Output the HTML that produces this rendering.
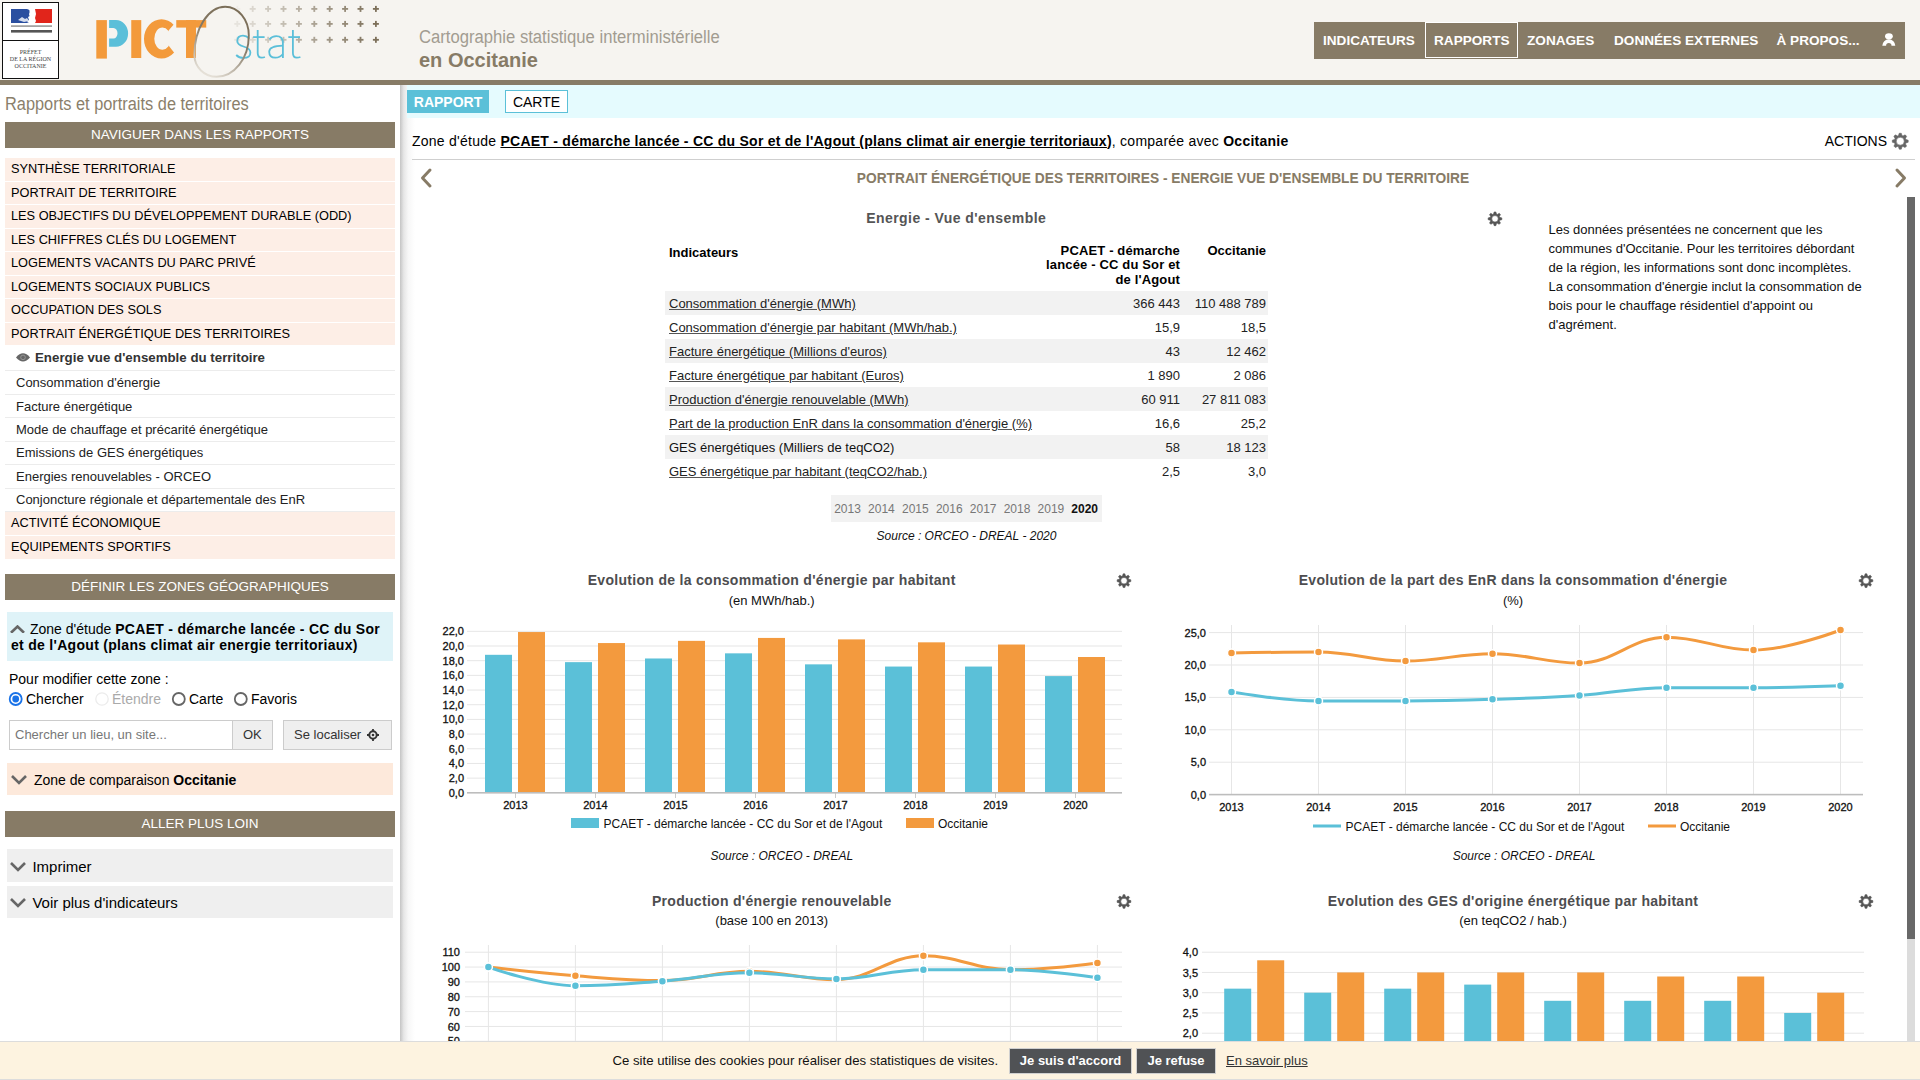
<!DOCTYPE html>
<html lang="fr"><head><meta charset="utf-8"><title>PICTstat</title><style>
*{box-sizing:border-box;margin:0;padding:0}
html,body{width:1920px;height:1080px;overflow:hidden;background:#fff;font-family:"Liberation Sans",sans-serif;font-size:13px;color:#000}
.a{position:absolute;white-space:nowrap}
#hdr{position:absolute;left:0;top:0;width:1920px;height:80px;background:#f6f4f0}
#hbar{position:absolute;left:0;top:80px;width:1920px;height:5px;background:#877b66}
#nav{position:absolute;left:1314px;top:22px;width:591px;height:37px;background:#877b66}
#nav span{position:absolute;top:0;height:37px;line-height:37px;color:#fff;font-weight:bold;font-size:13.6px}
#shadow{position:absolute;left:400px;top:85px;width:15px;height:956px;background:linear-gradient(to right,#c4c4c4,#e6e6e6 25%,#f7f7f7 55%,#fff)}
.bbar{position:absolute;left:5px;width:390px;height:26px;background:#877b66;color:#fff;text-align:center;font-size:13.5px;line-height:26px}
.mi{position:absolute;left:5px;width:390px;height:22.5px;background:#fdeee6;font-size:12.75px;line-height:22px;padding-left:6px}
.si{position:absolute;left:5px;width:390px;border-bottom:1px solid #ececec;font-size:12.5px;padding-left:11px;color:#222}
#cyan{position:absolute;left:407px;top:85px;width:1513px;height:33px;background:#e5fbfe}
#cookie{position:absolute;left:0;top:1041px;width:1920px;height:39px;background:#fdf3e0;border-top:1px solid #dcdcdc;border-bottom:1px solid #dcdcdc}
.acc{position:absolute;left:7px;width:386px}
.chev{position:absolute}
</style></head><body>
<div id="hdr"></div><div id="hbar"></div>
<div class="a" style="left:2px;top:2px;width:57px;height:77px;border:1.3px solid #111;background:#fff"></div>
<div class="a" style="left:3px;top:39.6px;width:55px;height:1.3px;background:#111"></div>
<svg class="a" style="left:0;top:0" width="60" height="80">
<rect x="11" y="9" width="18.5" height="14" fill="#2a4fa0"/>
<rect x="35" y="9" width="17" height="14" fill="#e1251b"/>
<path d="M27 9 C31 10 31 12 29 14 L30 16 L28 17 L29 20 L27 22 L29 23 L35 23 L36 21 L35 18 L36 14 L35 9 Z" fill="#fff"/>
<path d="M18 20 L22 17 L25 19 L27 18 L29 21 L24 22 Z" fill="#fff" opacity="0.8"/>
<rect x="11" y="25.3" width="41" height="1.6" fill="#999"/>
<rect x="11" y="30" width="41" height="2.6" fill="#555"/>
</svg>
<div class="a" style="left:3px;top:49px;width:55px;text-align:center;font-family:'Liberation Serif',serif;font-size:6px;line-height:7px;color:#444">PRÉFET<br>DE LA RÉGION<br>OCCITANIE</div>
<svg class="a" style="left:0;top:0" width="400" height="80">
<defs><linearGradient id="rg" x1="0.7" y1="0" x2="0.3" y2="1"><stop offset="0" stop-color="#7a6d57"/><stop offset="0.45" stop-color="#857966"/><stop offset="1" stop-color="#e6e1d8"/></linearGradient></defs>
<g fill="#7d705a"><g transform="translate(237.3,8.9)" opacity="0.05"><rect x="-3" y="-0.9" width="6" height="1.8"/><rect x="-0.9" y="-3" width="1.8" height="6"/></g><g transform="translate(252.7,8.9)" opacity="0.22"><rect x="-3" y="-0.9" width="6" height="1.8"/><rect x="-0.9" y="-3" width="1.8" height="6"/></g><g transform="translate(268.1,8.9)" opacity="0.32"><rect x="-3" y="-0.9" width="6" height="1.8"/><rect x="-0.9" y="-3" width="1.8" height="6"/></g><g transform="translate(283.5,8.9)" opacity="0.41"><rect x="-3" y="-0.9" width="6" height="1.8"/><rect x="-0.9" y="-3" width="1.8" height="6"/></g><g transform="translate(298.9,8.9)" opacity="0.51"><rect x="-3" y="-0.9" width="6" height="1.8"/><rect x="-0.9" y="-3" width="1.8" height="6"/></g><g transform="translate(314.3,8.9)" opacity="0.61"><rect x="-3" y="-0.9" width="6" height="1.8"/><rect x="-0.9" y="-3" width="1.8" height="6"/></g><g transform="translate(329.7,8.9)" opacity="0.71"><rect x="-3" y="-0.9" width="6" height="1.8"/><rect x="-0.9" y="-3" width="1.8" height="6"/></g><g transform="translate(345.1,8.9)" opacity="0.80"><rect x="-3" y="-0.9" width="6" height="1.8"/><rect x="-0.9" y="-3" width="1.8" height="6"/></g><g transform="translate(360.5,8.9)" opacity="0.90"><rect x="-3" y="-0.9" width="6" height="1.8"/><rect x="-0.9" y="-3" width="1.8" height="6"/></g><g transform="translate(375.9,8.9)" opacity="1.00"><rect x="-3" y="-0.9" width="6" height="1.8"/><rect x="-0.9" y="-3" width="1.8" height="6"/></g><g transform="translate(237.3,23.9)" opacity="0.12"><rect x="-3" y="-0.9" width="6" height="1.8"/><rect x="-0.9" y="-3" width="1.8" height="6"/></g><g transform="translate(252.7,23.9)" opacity="0.22"><rect x="-3" y="-0.9" width="6" height="1.8"/><rect x="-0.9" y="-3" width="1.8" height="6"/></g><g transform="translate(268.1,23.9)" opacity="0.32"><rect x="-3" y="-0.9" width="6" height="1.8"/><rect x="-0.9" y="-3" width="1.8" height="6"/></g><g transform="translate(283.5,23.9)" opacity="0.41"><rect x="-3" y="-0.9" width="6" height="1.8"/><rect x="-0.9" y="-3" width="1.8" height="6"/></g><g transform="translate(298.9,23.9)" opacity="0.51"><rect x="-3" y="-0.9" width="6" height="1.8"/><rect x="-0.9" y="-3" width="1.8" height="6"/></g><g transform="translate(314.3,23.9)" opacity="0.61"><rect x="-3" y="-0.9" width="6" height="1.8"/><rect x="-0.9" y="-3" width="1.8" height="6"/></g><g transform="translate(329.7,23.9)" opacity="0.71"><rect x="-3" y="-0.9" width="6" height="1.8"/><rect x="-0.9" y="-3" width="1.8" height="6"/></g><g transform="translate(345.1,23.9)" opacity="0.80"><rect x="-3" y="-0.9" width="6" height="1.8"/><rect x="-0.9" y="-3" width="1.8" height="6"/></g><g transform="translate(360.5,23.9)" opacity="0.90"><rect x="-3" y="-0.9" width="6" height="1.8"/><rect x="-0.9" y="-3" width="1.8" height="6"/></g><g transform="translate(375.9,23.9)" opacity="1.00"><rect x="-3" y="-0.9" width="6" height="1.8"/><rect x="-0.9" y="-3" width="1.8" height="6"/></g><g transform="translate(237.3,39.8)" opacity="0.12"><rect x="-3" y="-0.9" width="6" height="1.8"/><rect x="-0.9" y="-3" width="1.8" height="6"/></g><g transform="translate(252.7,39.8)" opacity="0.22"><rect x="-3" y="-0.9" width="6" height="1.8"/><rect x="-0.9" y="-3" width="1.8" height="6"/></g><g transform="translate(268.1,39.8)" opacity="0.32"><rect x="-3" y="-0.9" width="6" height="1.8"/><rect x="-0.9" y="-3" width="1.8" height="6"/></g><g transform="translate(283.5,39.8)" opacity="0.41"><rect x="-3" y="-0.9" width="6" height="1.8"/><rect x="-0.9" y="-3" width="1.8" height="6"/></g><g transform="translate(298.9,39.8)" opacity="0.51"><rect x="-3" y="-0.9" width="6" height="1.8"/><rect x="-0.9" y="-3" width="1.8" height="6"/></g><g transform="translate(314.3,39.8)" opacity="0.61"><rect x="-3" y="-0.9" width="6" height="1.8"/><rect x="-0.9" y="-3" width="1.8" height="6"/></g><g transform="translate(329.7,39.8)" opacity="0.71"><rect x="-3" y="-0.9" width="6" height="1.8"/><rect x="-0.9" y="-3" width="1.8" height="6"/></g><g transform="translate(345.1,39.8)" opacity="0.80"><rect x="-3" y="-0.9" width="6" height="1.8"/><rect x="-0.9" y="-3" width="1.8" height="6"/></g><g transform="translate(360.5,39.8)" opacity="0.90"><rect x="-3" y="-0.9" width="6" height="1.8"/><rect x="-0.9" y="-3" width="1.8" height="6"/></g><g transform="translate(375.9,39.8)" opacity="1.00"><rect x="-3" y="-0.9" width="6" height="1.8"/><rect x="-0.9" y="-3" width="1.8" height="6"/></g></g>
<g fill="none" stroke="#5bbfd9" stroke-width="1.8" stroke-linecap="butt"><path d="M249.4 38.6 Q246.5 35.6 243 35.6 Q237.3 35.6 237.3 41 Q237.3 44.6 243.5 46.5 Q250.4 48.6 250.4 52.4 Q250.4 57.9 243.5 57.9 Q239 57.9 236.2 55"/><path d="M257.7 30 V53 Q257.7 57.6 261.6 57.6 Q263.5 57.6 264.9 57"/><path d="M253.1 37.1 H264.6"/><path d="M269.4 39.4 Q272 36.2 276.3 36.2 Q282.9 36.2 282.9 43 V57.9"/><path d="M282.9 45.6 Q269.2 45.8 269.2 51.8 Q269.2 57.7 275.3 57.7 Q280 57.7 282.9 54"/><path d="M292.9 30 V53 Q292.9 57.6 296.8 57.6 Q298.7 57.6 300.4 57"/><path d="M288.3 37.1 H300"/></g>
<g fill="#f39a3b">
<rect x="96.3" y="20.1" width="10.6" height="38.5"/>
<rect x="131.25" y="20.1" width="10" height="37.9"/>
<path fill-rule="evenodd" d="M179 38.9 A17.5 19.7 0 1 0 144 38.9 A17.5 19.7 0 1 0 179 38.9Z M170.7 38.7 A8.2 11.1 0 1 0 154.3 38.7 A8.2 11.1 0 1 0 170.7 38.7Z"/>
</g>
<path d="M169 30.1 L183.5 13 L186 13 L186 66 L184.7 66 L169.7 47 L164 38.7Z" fill="#f6f4f0"/>
<g fill="#f39a3b">
<rect x="176.25" y="20.1" width="30" height="7.5"/>
<rect x="186" y="20.1" width="10" height="37.9"/>
</g>
<path d="M109.1 20.1 H116 A12.1 13.3 0 0 1 116 46.7 H109.1 V38.6 H113.5 A4 5.35 0 0 0 113.5 27.9 H109.1 Z" fill="#5bbfd9"/>
<path d="M225.2 6.7 C238.2 6.7 248.8 19.55 248.8 35.4 C248.8 58.27 234.34 76.8 216.5 76.8 C204.3 76.8 194.4 67.1 194.4 55.1 C194.4 28.37 208.2 6.7 225.2 6.7Z" fill="none" stroke="url(#rg)" stroke-width="1.9"/>
</svg>
<div class="a" style="left:419px;top:26px;font-size:18px;line-height:22px;color:#a29c91;transform-origin:0 0;transform:scaleX(0.925)">Cartographie statistique interministérielle</div>
<div class="a" style="left:419px;top:48px;font-size:20px;line-height:24px;color:#877b66;font-weight:bold">en Occitanie</div>
<div id="nav">
<span style="left:9px">INDICATEURS</span>
<div class="a" style="left:111.3px;top:0.4px;width:92.3px;height:35.7px;border:1px solid #fff"></div>
<span style="left:120px">RAPPORTS</span>
<span style="left:213px">ZONAGES</span>
<span style="left:300px">DONNÉES EXTERNES</span>
<span style="left:462.5px">À PROPOS...</span>
<svg class="a" style="left:560px;top:5px" width="30" height="30"><ellipse cx="14.9" cy="9.3" rx="3.9" ry="3.1" fill="#fff"/><path d="M10.2 18.8 A4.6 4.6 0 0 1 19.4 18.8" fill="none" stroke="#fff" stroke-width="3.8"/></svg>
</div>
<div id="shadow"></div>
<div class="a" style="left:5px;top:94px;font-size:17.5px;line-height:20px;color:#8b7f6b;transform-origin:0 0;transform:scaleX(0.935)">Rapports et portraits de territoires</div>
<div class="bbar" style="top:122px">NAVIGUER DANS LES RAPPORTS</div>
<div class="mi" style="top:158.0px">SYNTHÈSE TERRITORIALE</div>
<div class="mi" style="top:181.5px">PORTRAIT DE TERRITOIRE</div>
<div class="mi" style="top:205.0px">LES OBJECTIFS DU DÉVELOPPEMENT DURABLE (ODD)</div>
<div class="mi" style="top:228.5px">LES CHIFFRES CLÉS DU LOGEMENT</div>
<div class="mi" style="top:252.0px">LOGEMENTS VACANTS DU PARC PRIVÉ</div>
<div class="mi" style="top:275.5px">LOGEMENTS SOCIAUX PUBLICS</div>
<div class="mi" style="top:299.0px">OCCUPATION DES SOLS</div>
<div class="mi" style="top:322.5px">PORTRAIT ÉNERGÉTIQUE DES TERRITOIRES</div>
<div class="si" style="top:345px;height:25.5px;line-height:25px;font-weight:bold;font-size:13.3px;padding-left:30px;color:#333;line-height:26px">Energie vue d'ensemble du territoire</div>
<svg class="a" style="left:15px;top:352px" width="17" height="11"><path d="M1 5.4 Q8 -2.8 15 5.4 Q8 13.6 1 5.4Z" fill="#666"/><circle cx="8" cy="5.4" r="2.3" fill="none" stroke="#999" stroke-width="0.9"/></svg>
<div class="si" style="top:371.20px;height:23.8px;line-height:24px;font-size:13px">Consommation d'énergie</div>
<div class="si" style="top:394.62px;height:23.8px;line-height:24px;font-size:13px">Facture énergétique</div>
<div class="si" style="top:418.04px;height:23.8px;line-height:24px;font-size:13px">Mode de chauffage et précarité énergétique</div>
<div class="si" style="top:441.46px;height:23.8px;line-height:24px;font-size:13px">Emissions de GES énergétiques</div>
<div class="si" style="top:464.88px;height:23.8px;line-height:24px;font-size:13px">Energies renouvelables - ORCEO</div>
<div class="si" style="top:488.30px;height:23.8px;line-height:24px;font-size:13px">Conjoncture régionale et départementale des EnR</div>
<div class="mi" style="top:511.5px;height:23.2px">ACTIVITÉ ÉCONOMIQUE</div>
<div class="mi" style="top:535.7px;height:23.2px">EQUIPEMENTS SPORTIFS</div>
<div class="bbar" style="top:574px">DÉFINIR LES ZONES GÉOGRAPHIQUES</div>
<div class="acc" style="top:612px;height:49px;background:#dff3f8"></div>
<svg class="a" style="left:9.5px;top:624.5px" width="15" height="8.8"><path d="M1 7.800000000000001 L7.5 1.5 L14 7.800000000000001" fill="none" stroke="#666" stroke-width="2.6"/></svg>
<div class="a" style="left:11px;top:621px;width:380px;white-space:normal;font-size:14px;line-height:16px;text-indent:19px">Zone d'étude <b style="letter-spacing:0.3px">PCAET - démarche lancée - CC du Sor et de l'Agout (plans climat air energie territoriaux)</b></div>
<div class="a" style="left:9px;top:669.6px;font-size:14px;line-height:18px">Pour modifier cette zone :</div>
<svg class="a" style="left:0;top:690px" width="400" height="20">
<circle cx="15.7" cy="9" r="6" fill="#fff" stroke="#1a73e8" stroke-width="1.8"/><circle cx="15.7" cy="9" r="3.4" fill="#1a73e8"/>
<circle cx="102" cy="9" r="6.2" fill="#fff" stroke="#ececec" stroke-width="1.3"/>
<circle cx="178.8" cy="9" r="6" fill="#fff" stroke="#666" stroke-width="1.8"/>
<circle cx="240.8" cy="9" r="6" fill="#fff" stroke="#666" stroke-width="1.8"/>
</svg>
<div class="a" style="left:26px;top:690px;font-size:14px;line-height:18px">Chercher</div>
<div class="a" style="left:112px;top:690px;font-size:14px;line-height:18px;color:#aaa">Étendre</div>
<div class="a" style="left:189px;top:690px;font-size:14px;line-height:18px">Carte</div>
<div class="a" style="left:251px;top:690px;font-size:14px;line-height:18px">Favoris</div>
<div class="a" style="left:9px;top:720px;width:264px;height:30px;border:1px solid #ccc;background:#fff"></div>
<div class="a" style="left:232px;top:720px;width:41px;height:30px;border:1px solid #ccc;background:#efefef"></div>
<div class="a" style="left:15px;top:727px;font-size:13px;line-height:16px;color:#777">Chercher un lieu, un site...</div>
<div class="a" style="left:243px;top:727px;font-size:13px;line-height:16px;color:#333">OK</div>
<div class="a" style="left:283px;top:720px;width:109px;height:30px;border:1px solid #ccc;background:#efefef"></div>
<div class="a" style="left:294px;top:727px;font-size:13px;line-height:16px;color:#333">Se localiser</div>
<svg class="a" style="left:366px;top:728px" width="14" height="14"><circle cx="7" cy="7" r="3.7" fill="none" stroke="#333" stroke-width="2"/><circle cx="7" cy="7" r="1.3" fill="#333"/><path d="M7 1V3.2M7 10.8V13M1 7H3.2M10.8 7H13" stroke="#333" stroke-width="1.8"/></svg>
<div class="acc" style="top:763px;height:32px;background:#fde9db"></div>
<svg class="a" style="left:10.5px;top:775px" width="16" height="9.5"><path d="M1 1 L8.0 8.0 L15 1" fill="none" stroke="#666" stroke-width="2.6"/></svg>
<div class="a" style="left:34px;top:771px;font-size:14px;line-height:18px">Zone de comparaison <b>Occitanie</b></div>
<div class="bbar" style="top:811px">ALLER PLUS LOIN</div>
<div class="acc" style="top:849px;height:33px;background:#efefef"></div>
<svg class="a" style="left:10px;top:862px" width="16" height="9.5"><path d="M1 1 L8.0 8.0 L15 1" fill="none" stroke="#666" stroke-width="2.6"/></svg>
<div class="a" style="left:32.4px;top:858px;font-size:15px;line-height:18px">Imprimer</div>
<div class="acc" style="top:886px;height:32px;background:#efefef"></div>
<svg class="a" style="left:10px;top:898px" width="16" height="9.5"><path d="M1 1 L8.0 8.0 L15 1" fill="none" stroke="#666" stroke-width="2.6"/></svg>
<div class="a" style="left:32.4px;top:894px;font-size:15px;line-height:18px">Voir plus d'indicateurs</div>
<div id="cyan"></div>
<div class="a" style="left:407px;top:90px;width:82px;height:23px;background:#5bc0d8;color:#fff;font-weight:bold;font-size:14px;line-height:24px;text-align:center">RAPPORT</div>
<div class="a" style="left:505px;top:90px;width:63px;height:23px;background:#fff;border:1px solid #5bc0d8;font-size:14px;line-height:22.5px;text-align:center">CARTE</div>
<div class="a" style="left:412px;top:133.25px;font-size:14px;line-height:17px;letter-spacing:0.25px">Zone d'étude <b style="text-decoration:underline">PCAET - démarche lancée - CC du Sor et de l'Agout (plans climat air energie territoriaux</b><b>)</b>, comparée avec <b>Occitanie</b></div>
<div class="a" style="right:33px;top:133.05px;font-size:14px;line-height:17px;text-align:right;">ACTIONS</div>
<svg class="a" style="left:1890px;top:131px" width="22" height="20"><path d="M8.51 4.56 L9.21 2.27 L11.29 2.27 L11.99 4.56 L13.00 4.98 L15.13 3.86 L16.59 5.32 L15.47 7.45 L15.89 8.46 L18.18 9.16 L18.18 11.24 L15.89 11.94 L15.47 12.95 L16.59 15.08 L15.13 16.54 L13.00 15.42 L11.99 15.84 L11.29 18.13 L9.21 18.13 L8.51 15.84 L7.50 15.42 L5.37 16.54 L3.91 15.08 L5.03 12.95 L4.61 11.94 L2.32 11.24 L2.32 9.16 L4.61 8.46 L5.03 7.45 L3.91 5.32 L5.37 3.86 L7.50 4.98Z M14.25 10.20 A4.0 4.0 0 1 0 6.25 10.20 A4.0 4.0 0 1 0 14.25 10.20Z" fill="#666" fill-rule="evenodd" stroke="#666" stroke-width="0.6" stroke-linejoin="round"/></svg>
<div class="a" style="left:412px;top:159px;width:1503px;height:1px;background:#cfcfcf"></div>
<svg class="a" style="left:418px;top:167px" width="16" height="22"><path d="M12 3 L4.5 11 L12 19" fill="none" stroke="#877b66" stroke-width="3" stroke-linecap="round" stroke-linejoin="round"/></svg>
<svg class="a" style="left:1893px;top:167px" width="16" height="22"><path d="M4 3 L11.5 11 L4 19" fill="none" stroke="#877b66" stroke-width="3" stroke-linecap="round" stroke-linejoin="round"/></svg>
<div class="a" style="left:763px;width:800px;top:170.64px;font-size:13.75px;line-height:16px;text-align:center;font-weight:bold;color:#877b66">PORTRAIT ÉNERGÉTIQUE DES TERRITOIRES - ENERGIE VUE D'ENSEMBLE DU TERRITOIRE</div>
<div class="a" style="left:1907px;top:197px;width:8px;height:844px;background:#dcdcdc"></div>
<div class="a" style="left:1907px;top:197px;width:8px;height:742px;background:#686868"></div>
<div class="a" style="left:556.2px;width:800px;top:210.05px;font-size:14px;line-height:17px;text-align:center;font-weight:bold;color:#555;letter-spacing:0.45px">Energie - Vue d'ensemble</div>
<svg class="a" style="left:1485px;top:209px" width="20" height="20"><path d="M8.55 5.12 L9.11 2.96 L10.89 2.96 L11.45 5.12 L12.29 5.47 L14.21 4.33 L15.47 5.59 L14.33 7.51 L14.68 8.35 L16.84 8.91 L16.84 10.69 L14.68 11.25 L14.33 12.09 L15.47 14.01 L14.21 15.27 L12.29 14.13 L11.45 14.48 L10.89 16.64 L9.11 16.64 L8.55 14.48 L7.71 14.13 L5.79 15.27 L4.53 14.01 L5.67 12.09 L5.32 11.25 L3.16 10.69 L3.16 8.91 L5.32 8.35 L5.67 7.51 L4.53 5.59 L5.79 4.33 L7.71 5.47Z M13.25 9.80 A3.25 3.25 0 1 0 6.75 9.80 A3.25 3.25 0 1 0 13.25 9.80Z" fill="#555" fill-rule="evenodd" stroke="#555" stroke-width="0.6" stroke-linejoin="round"/></svg>
<div class="a" style="left:669px;top:244.50px;font-size:13px;line-height:16px;font-weight:bold">Indicateurs</div>
<div class="a" style="right:740px;top:243.90px;font-size:13px;line-height:14.6px;text-align:right;font-weight:bold;white-space:nowrap;letter-spacing:0.15px">PCAET - démarche<br>lancée - CC du Sor et<br>de l'Agout</div>
<div class="a" style="right:654px;top:243.20px;font-size:13px;line-height:16px;text-align:right;font-weight:bold">Occitanie</div>
<div class="a" style="left:665px;top:291px;width:603px;height:24px;background:#f2f2f2"></div>
<div class="a" style="left:669px;top:295.70px;font-size:13px;line-height:16px;color:#222;text-decoration:underline;text-decoration-color:#555">Consommation d'énergie (MWh)</div>
<div class="a" style="right:740px;top:295.70px;font-size:13px;line-height:16px;text-align:right;color:#222">366 443</div>
<div class="a" style="right:654px;top:295.70px;font-size:13px;line-height:16px;text-align:right;color:#222">110 488 789</div>
<div class="a" style="left:669px;top:319.70px;font-size:13px;line-height:16px;color:#222;text-decoration:underline;text-decoration-color:#555">Consommation d'énergie par habitant (MWh/hab.)</div>
<div class="a" style="right:740px;top:319.70px;font-size:13px;line-height:16px;text-align:right;color:#222">15,9</div>
<div class="a" style="right:654px;top:319.70px;font-size:13px;line-height:16px;text-align:right;color:#222">18,5</div>
<div class="a" style="left:665px;top:339px;width:603px;height:24px;background:#f2f2f2"></div>
<div class="a" style="left:669px;top:343.70px;font-size:13px;line-height:16px;color:#222;text-decoration:underline;text-decoration-color:#555">Facture énergétique (Millions d'euros)</div>
<div class="a" style="right:740px;top:343.70px;font-size:13px;line-height:16px;text-align:right;color:#222">43</div>
<div class="a" style="right:654px;top:343.70px;font-size:13px;line-height:16px;text-align:right;color:#222">12 462</div>
<div class="a" style="left:669px;top:367.70px;font-size:13px;line-height:16px;color:#222;text-decoration:underline;text-decoration-color:#555">Facture énergétique par habitant (Euros)</div>
<div class="a" style="right:740px;top:367.70px;font-size:13px;line-height:16px;text-align:right;color:#222">1 890</div>
<div class="a" style="right:654px;top:367.70px;font-size:13px;line-height:16px;text-align:right;color:#222">2 086</div>
<div class="a" style="left:665px;top:387px;width:603px;height:24px;background:#f2f2f2"></div>
<div class="a" style="left:669px;top:391.70px;font-size:13px;line-height:16px;color:#222;text-decoration:underline;text-decoration-color:#555">Production d'énergie renouvelable (MWh)</div>
<div class="a" style="right:740px;top:391.70px;font-size:13px;line-height:16px;text-align:right;color:#222">60 911</div>
<div class="a" style="right:654px;top:391.70px;font-size:13px;line-height:16px;text-align:right;color:#222">27 811 083</div>
<div class="a" style="left:669px;top:415.70px;font-size:13px;line-height:16px;color:#222;text-decoration:underline;text-decoration-color:#555">Part de la production EnR dans la consommation d'énergie (%)</div>
<div class="a" style="right:740px;top:415.70px;font-size:13px;line-height:16px;text-align:right;color:#222">16,6</div>
<div class="a" style="right:654px;top:415.70px;font-size:13px;line-height:16px;text-align:right;color:#222">25,2</div>
<div class="a" style="left:665px;top:435px;width:603px;height:24px;background:#f2f2f2"></div>
<div class="a" style="left:669px;top:439.70px;font-size:13px;line-height:16px;color:#111">GES énergétiques (Milliers de teqCO2)</div>
<div class="a" style="right:740px;top:439.70px;font-size:13px;line-height:16px;text-align:right;color:#222">58</div>
<div class="a" style="right:654px;top:439.70px;font-size:13px;line-height:16px;text-align:right;color:#222">18 123</div>
<div class="a" style="left:669px;top:463.70px;font-size:13px;line-height:16px;color:#222;text-decoration:underline;text-decoration-color:#555">GES énergétique par habitant (teqCO2/hab.)</div>
<div class="a" style="right:740px;top:463.70px;font-size:13px;line-height:16px;text-align:right;color:#222">2,5</div>
<div class="a" style="right:654px;top:463.70px;font-size:13px;line-height:16px;text-align:right;color:#222">3,0</div>
<div class="a" style="left:831px;top:495px;width:271px;height:27px;background:#f2f2f2"></div>
<div class="a" style="left:834.2px;top:501.84px;font-size:12px;line-height:14px;color:#777">2013</div>
<div class="a" style="left:868.1px;top:501.84px;font-size:12px;line-height:14px;color:#777">2014</div>
<div class="a" style="left:902.0px;top:501.84px;font-size:12px;line-height:14px;color:#777">2015</div>
<div class="a" style="left:935.9000000000001px;top:501.84px;font-size:12px;line-height:14px;color:#777">2016</div>
<div class="a" style="left:969.8000000000001px;top:501.84px;font-size:12px;line-height:14px;color:#777">2017</div>
<div class="a" style="left:1003.7px;top:501.84px;font-size:12px;line-height:14px;color:#777">2018</div>
<div class="a" style="left:1037.6px;top:501.84px;font-size:12px;line-height:14px;color:#777">2019</div>
<div class="a" style="left:1071.3px;top:501.84px;font-size:12px;line-height:14px;font-weight:bold;color:#111">2020</div>
<div class="a" style="left:566.5px;width:800px;top:528.64px;font-size:12px;line-height:14px;text-align:center;font-style:italic;color:#111">Source : ORCEO - DREAL - 2020</div>
<div class="a" style="left:1548.5px;top:221.50px;font-size:13px;line-height:16px;color:#111">Les données présentées ne concernent que les</div>
<div class="a" style="left:1548.5px;top:240.50px;font-size:13px;line-height:16px;color:#111">communes d'Occitanie. Pour les territoires débordant</div>
<div class="a" style="left:1548.5px;top:259.50px;font-size:13px;line-height:16px;color:#111">de la région, les informations sont donc incomplètes.</div>
<div class="a" style="left:1548.5px;top:278.50px;font-size:13px;line-height:16px;color:#111">La consommation d'énergie inclut la consommation de</div>
<div class="a" style="left:1548.5px;top:297.50px;font-size:13px;line-height:16px;color:#111">bois pour le chauffage résidentiel d'appoint ou</div>
<div class="a" style="left:1548.5px;top:316.50px;font-size:13px;line-height:16px;color:#111">d'agrément.</div>
<svg class="a" style="left:0;top:0" width="1920" height="1080"><text x="771.7" y="584.8" font-family="Liberation Sans" font-size="14" text-anchor="middle" fill="#4d4d4f" font-weight="bold" letter-spacing="0.3">Evolution de la consommation d&#39;énergie par habitant</text><text x="771.7" y="604.9" font-family="Liberation Sans" font-size="13" text-anchor="middle" fill="#111" >(en MWh/hab.)</text><path d="M1122.55 576.02 L1123.11 573.86 L1124.89 573.86 L1125.45 576.02 L1126.29 576.37 L1128.21 575.23 L1129.47 576.49 L1128.33 578.41 L1128.68 579.25 L1130.84 579.81 L1130.84 581.59 L1128.68 582.15 L1128.33 582.99 L1129.47 584.91 L1128.21 586.17 L1126.29 585.03 L1125.45 585.38 L1124.89 587.54 L1123.11 587.54 L1122.55 585.38 L1121.71 585.03 L1119.79 586.17 L1118.53 584.91 L1119.67 582.99 L1119.32 582.15 L1117.16 581.59 L1117.16 579.81 L1119.32 579.25 L1119.67 578.41 L1118.53 576.49 L1119.79 575.23 L1121.71 576.37Z M1127.25 580.70 A3.25 3.25 0 1 0 1120.75 580.70 A3.25 3.25 0 1 0 1127.25 580.70Z" fill="#555" fill-rule="evenodd" stroke="#555" stroke-width="0.6" stroke-linejoin="round"/><rect x="467" y="777.62" width="655" height="1" fill="#e6e6e6"/><rect x="467" y="762.94" width="655" height="1" fill="#e6e6e6"/><rect x="467" y="748.26" width="655" height="1" fill="#e6e6e6"/><rect x="467" y="733.58" width="655" height="1" fill="#e6e6e6"/><rect x="467" y="718.90" width="655" height="1" fill="#e6e6e6"/><rect x="467" y="704.22" width="655" height="1" fill="#e6e6e6"/><rect x="467" y="689.54" width="655" height="1" fill="#e6e6e6"/><rect x="467" y="674.86" width="655" height="1" fill="#e6e6e6"/><rect x="467" y="660.18" width="655" height="1" fill="#e6e6e6"/><rect x="467" y="645.50" width="655" height="1" fill="#e6e6e6"/><rect x="467" y="630.82" width="655" height="1" fill="#e6e6e6"/><text x="464" y="796.8" font-family="Liberation Sans" font-size="11" text-anchor="end" fill="#111" stroke="#111" stroke-width="0.3">0,0</text><text x="464" y="782.1" font-family="Liberation Sans" font-size="11" text-anchor="end" fill="#111" stroke="#111" stroke-width="0.3">2,0</text><text x="464" y="767.4" font-family="Liberation Sans" font-size="11" text-anchor="end" fill="#111" stroke="#111" stroke-width="0.3">4,0</text><text x="464" y="752.8" font-family="Liberation Sans" font-size="11" text-anchor="end" fill="#111" stroke="#111" stroke-width="0.3">6,0</text><text x="464" y="738.1" font-family="Liberation Sans" font-size="11" text-anchor="end" fill="#111" stroke="#111" stroke-width="0.3">8,0</text><text x="464" y="723.4" font-family="Liberation Sans" font-size="11" text-anchor="end" fill="#111" stroke="#111" stroke-width="0.3">10,0</text><text x="464" y="708.7" font-family="Liberation Sans" font-size="11" text-anchor="end" fill="#111" stroke="#111" stroke-width="0.3">12,0</text><text x="464" y="694.0" font-family="Liberation Sans" font-size="11" text-anchor="end" fill="#111" stroke="#111" stroke-width="0.3">14,0</text><text x="464" y="679.4" font-family="Liberation Sans" font-size="11" text-anchor="end" fill="#111" stroke="#111" stroke-width="0.3">16,0</text><text x="464" y="664.7" font-family="Liberation Sans" font-size="11" text-anchor="end" fill="#111" stroke="#111" stroke-width="0.3">18,0</text><text x="464" y="650.0" font-family="Liberation Sans" font-size="11" text-anchor="end" fill="#111" stroke="#111" stroke-width="0.3">20,0</text><text x="464" y="635.3" font-family="Liberation Sans" font-size="11" text-anchor="end" fill="#111" stroke="#111" stroke-width="0.3">22,0</text><rect x="485" y="654.81" width="27" height="137.99" fill="#5bc0d8"/><rect x="518" y="632.05" width="27" height="160.75" fill="#f39a3e"/><rect x="515" y="793" width="1" height="5" fill="#ccc"/><text x="515.5" y="808.8" font-family="Liberation Sans" font-size="11" text-anchor="middle" fill="#111" stroke="#111" stroke-width="0.3">2013</text><rect x="565" y="662.15" width="27" height="130.65" fill="#5bc0d8"/><rect x="598" y="643.06" width="27" height="149.74" fill="#f39a3e"/><rect x="595" y="793" width="1" height="5" fill="#ccc"/><text x="595.5" y="808.8" font-family="Liberation Sans" font-size="11" text-anchor="middle" fill="#111" stroke="#111" stroke-width="0.3">2014</text><rect x="645" y="658.48" width="27" height="134.32" fill="#5bc0d8"/><rect x="678" y="640.86" width="27" height="151.94" fill="#f39a3e"/><rect x="675" y="793" width="1" height="5" fill="#ccc"/><text x="675.5" y="808.8" font-family="Liberation Sans" font-size="11" text-anchor="middle" fill="#111" stroke="#111" stroke-width="0.3">2015</text><rect x="725" y="653.34" width="27" height="139.46" fill="#5bc0d8"/><rect x="758" y="637.93" width="27" height="154.87" fill="#f39a3e"/><rect x="755" y="793" width="1" height="5" fill="#ccc"/><text x="755.5" y="808.8" font-family="Liberation Sans" font-size="11" text-anchor="middle" fill="#111" stroke="#111" stroke-width="0.3">2016</text><rect x="805" y="664.35" width="27" height="128.45" fill="#5bc0d8"/><rect x="838" y="639.39" width="27" height="153.41" fill="#f39a3e"/><rect x="835" y="793" width="1" height="5" fill="#ccc"/><text x="835.5" y="808.8" font-family="Liberation Sans" font-size="11" text-anchor="middle" fill="#111" stroke="#111" stroke-width="0.3">2017</text><rect x="885" y="666.55" width="27" height="126.25" fill="#5bc0d8"/><rect x="918" y="642.33" width="27" height="150.47" fill="#f39a3e"/><rect x="915" y="793" width="1" height="5" fill="#ccc"/><text x="915.5" y="808.8" font-family="Liberation Sans" font-size="11" text-anchor="middle" fill="#111" stroke="#111" stroke-width="0.3">2018</text><rect x="965" y="666.55" width="27" height="126.25" fill="#5bc0d8"/><rect x="998" y="644.53" width="27" height="148.27" fill="#f39a3e"/><rect x="995" y="793" width="1" height="5" fill="#ccc"/><text x="995.5" y="808.8" font-family="Liberation Sans" font-size="11" text-anchor="middle" fill="#111" stroke="#111" stroke-width="0.3">2019</text><rect x="1045" y="676.09" width="27" height="116.71" fill="#5bc0d8"/><rect x="1078" y="657.01" width="27" height="135.79" fill="#f39a3e"/><rect x="1075" y="793" width="1" height="5" fill="#ccc"/><text x="1075.5" y="808.8" font-family="Liberation Sans" font-size="11" text-anchor="middle" fill="#111" stroke="#111" stroke-width="0.3">2020</text><rect x="467" y="792" width="655" height="1.6" fill="#bdbdbd"/><rect x="571" y="818" width="28" height="10" fill="#5bc0d8"/><text x="603.5" y="828" font-family="Liberation Sans" font-size="12" text-anchor="start" fill="#111" >PCAET - démarche lancée - CC du Sor et de l&#39;Agout</text><rect x="906" y="818" width="28" height="10" fill="#f39a3e"/><text x="938" y="828" font-family="Liberation Sans" font-size="12" text-anchor="start" fill="#111" >Occitanie</text><text x="781.8" y="859.6" font-family="Liberation Sans" font-size="12" text-anchor="middle" fill="#111" font-style="italic" >Source : ORCEO - DREAL</text><text x="1513" y="584.8" font-family="Liberation Sans" font-size="14" text-anchor="middle" fill="#4d4d4f" font-weight="bold" letter-spacing="0.3">Evolution de la part des EnR dans la consommation d&#39;énergie</text><text x="1513" y="604.9" font-family="Liberation Sans" font-size="13" text-anchor="middle" fill="#111" >(%)</text><path d="M1864.55 576.02 L1865.11 573.86 L1866.89 573.86 L1867.45 576.02 L1868.29 576.37 L1870.21 575.23 L1871.47 576.49 L1870.33 578.41 L1870.68 579.25 L1872.84 579.81 L1872.84 581.59 L1870.68 582.15 L1870.33 582.99 L1871.47 584.91 L1870.21 586.17 L1868.29 585.03 L1867.45 585.38 L1866.89 587.54 L1865.11 587.54 L1864.55 585.38 L1863.71 585.03 L1861.79 586.17 L1860.53 584.91 L1861.67 582.99 L1861.32 582.15 L1859.16 581.59 L1859.16 579.81 L1861.32 579.25 L1861.67 578.41 L1860.53 576.49 L1861.79 575.23 L1863.71 576.37Z M1869.25 580.70 A3.25 3.25 0 1 0 1862.75 580.70 A3.25 3.25 0 1 0 1869.25 580.70Z" fill="#555" fill-rule="evenodd" stroke="#555" stroke-width="0.6" stroke-linejoin="round"/><rect x="1209" y="761.70" width="654" height="1" fill="#e6e6e6"/><rect x="1209" y="729.30" width="654" height="1" fill="#e6e6e6"/><rect x="1209" y="696.90" width="654" height="1" fill="#e6e6e6"/><rect x="1209" y="664.50" width="654" height="1" fill="#e6e6e6"/><rect x="1209" y="632.10" width="654" height="1" fill="#e6e6e6"/><rect x="1231.0" y="625" width="1" height="169.60000000000002" fill="#e6e6e6"/><rect x="1318.0" y="625" width="1" height="169.60000000000002" fill="#e6e6e6"/><rect x="1405.0" y="625" width="1" height="169.60000000000002" fill="#e6e6e6"/><rect x="1492.0" y="625" width="1" height="169.60000000000002" fill="#e6e6e6"/><rect x="1579.0" y="625" width="1" height="169.60000000000002" fill="#e6e6e6"/><rect x="1666.0" y="625" width="1" height="169.60000000000002" fill="#e6e6e6"/><rect x="1753.0" y="625" width="1" height="169.60000000000002" fill="#e6e6e6"/><rect x="1840.0" y="625" width="1" height="169.60000000000002" fill="#e6e6e6"/><text x="1206" y="798.6" font-family="Liberation Sans" font-size="11" text-anchor="end" fill="#111" stroke="#111" stroke-width="0.3">0,0</text><text x="1206" y="766.2" font-family="Liberation Sans" font-size="11" text-anchor="end" fill="#111" stroke="#111" stroke-width="0.3">5,0</text><text x="1206" y="733.8" font-family="Liberation Sans" font-size="11" text-anchor="end" fill="#111" stroke="#111" stroke-width="0.3">10,0</text><text x="1206" y="701.4" font-family="Liberation Sans" font-size="11" text-anchor="end" fill="#111" stroke="#111" stroke-width="0.3">15,0</text><text x="1206" y="669.0" font-family="Liberation Sans" font-size="11" text-anchor="end" fill="#111" stroke="#111" stroke-width="0.3">20,0</text><text x="1206" y="636.6" font-family="Liberation Sans" font-size="11" text-anchor="end" fill="#111" stroke="#111" stroke-width="0.3">25,0</text><rect x="1209" y="793.8000000000001" width="654" height="1.6" fill="#bdbdbd"/><text x="1231.5" y="810.6" font-family="Liberation Sans" font-size="11" text-anchor="middle" fill="#111" stroke="#111" stroke-width="0.3">2013</text><text x="1318.5" y="810.6" font-family="Liberation Sans" font-size="11" text-anchor="middle" fill="#111" stroke="#111" stroke-width="0.3">2014</text><text x="1405.5" y="810.6" font-family="Liberation Sans" font-size="11" text-anchor="middle" fill="#111" stroke="#111" stroke-width="0.3">2015</text><text x="1492.5" y="810.6" font-family="Liberation Sans" font-size="11" text-anchor="middle" fill="#111" stroke="#111" stroke-width="0.3">2016</text><text x="1579.5" y="810.6" font-family="Liberation Sans" font-size="11" text-anchor="middle" fill="#111" stroke="#111" stroke-width="0.3">2017</text><text x="1666.5" y="810.6" font-family="Liberation Sans" font-size="11" text-anchor="middle" fill="#111" stroke="#111" stroke-width="0.3">2018</text><text x="1753.5" y="810.6" font-family="Liberation Sans" font-size="11" text-anchor="middle" fill="#111" stroke="#111" stroke-width="0.3">2019</text><text x="1840.5" y="810.6" font-family="Liberation Sans" font-size="11" text-anchor="middle" fill="#111" stroke="#111" stroke-width="0.3">2020</text><path d="M1231.50 653.01 C1231.50 653.01 1283.70 652.04 1318.50 652.04 C1353.30 652.04 1370.70 661.11 1405.50 661.11 C1440.30 661.11 1457.70 653.66 1492.50 653.66 C1527.30 653.66 1544.70 663.06 1579.50 663.06 C1614.30 663.06 1631.70 637.14 1666.50 637.14 C1701.30 637.14 1718.70 650.10 1753.50 650.10 C1788.30 650.10 1840.50 630.01 1840.50 630.01" fill="none" stroke="#f39a3e" stroke-width="3" stroke-linejoin="round" stroke-linecap="round"/><circle cx="1231.5" cy="653.01" r="4" fill="#f39a3e" stroke="#fff" stroke-width="1.5"/><circle cx="1318.5" cy="652.04" r="4" fill="#f39a3e" stroke="#fff" stroke-width="1.5"/><circle cx="1405.5" cy="661.11" r="4" fill="#f39a3e" stroke="#fff" stroke-width="1.5"/><circle cx="1492.5" cy="653.66" r="4" fill="#f39a3e" stroke="#fff" stroke-width="1.5"/><circle cx="1579.5" cy="663.06" r="4" fill="#f39a3e" stroke="#fff" stroke-width="1.5"/><circle cx="1666.5" cy="637.14" r="4" fill="#f39a3e" stroke="#fff" stroke-width="1.5"/><circle cx="1753.5" cy="650.10" r="4" fill="#f39a3e" stroke="#fff" stroke-width="1.5"/><circle cx="1840.5" cy="630.01" r="4" fill="#f39a3e" stroke="#fff" stroke-width="1.5"/><path d="M1231.50 691.89 C1231.50 691.89 1283.70 700.90 1318.50 700.90 C1353.30 700.90 1370.70 700.90 1405.50 700.90 C1440.30 700.90 1457.70 700.43 1492.50 699.34 C1527.30 698.26 1544.70 697.79 1579.50 695.46 C1614.30 693.12 1631.70 687.68 1666.50 687.68 C1701.30 687.68 1718.70 687.68 1753.50 687.68 C1788.30 687.68 1840.50 685.74 1840.50 685.74" fill="none" stroke="#5bc0d8" stroke-width="3" stroke-linejoin="round" stroke-linecap="round"/><circle cx="1231.5" cy="691.89" r="4" fill="#5bc0d8" stroke="#fff" stroke-width="1.5"/><circle cx="1318.5" cy="700.90" r="4" fill="#5bc0d8" stroke="#fff" stroke-width="1.5"/><circle cx="1405.5" cy="700.90" r="4" fill="#5bc0d8" stroke="#fff" stroke-width="1.5"/><circle cx="1492.5" cy="699.34" r="4" fill="#5bc0d8" stroke="#fff" stroke-width="1.5"/><circle cx="1579.5" cy="695.46" r="4" fill="#5bc0d8" stroke="#fff" stroke-width="1.5"/><circle cx="1666.5" cy="687.68" r="4" fill="#5bc0d8" stroke="#fff" stroke-width="1.5"/><circle cx="1753.5" cy="687.68" r="4" fill="#5bc0d8" stroke="#fff" stroke-width="1.5"/><circle cx="1840.5" cy="685.74" r="4" fill="#5bc0d8" stroke="#fff" stroke-width="1.5"/><rect x="1313" y="824.5" width="28" height="3" fill="#5bc0d8"/><text x="1345.5" y="830.6" font-family="Liberation Sans" font-size="12" text-anchor="start" fill="#111" >PCAET - démarche lancée - CC du Sor et de l&#39;Agout</text><rect x="1648" y="824.5" width="28" height="3" fill="#f39a3e"/><text x="1680" y="830.6" font-family="Liberation Sans" font-size="12" text-anchor="start" fill="#111" >Occitanie</text><text x="1524" y="859.6" font-family="Liberation Sans" font-size="12" text-anchor="middle" fill="#111" font-style="italic" >Source : ORCEO - DREAL</text><text x="771.7" y="905.5" font-family="Liberation Sans" font-size="14" text-anchor="middle" fill="#4d4d4f" font-weight="bold" letter-spacing="0.3">Production d&#39;énergie renouvelable</text><text x="771.7" y="925" font-family="Liberation Sans" font-size="13" text-anchor="middle" fill="#111" >(base 100 en 2013)</text><path d="M1122.55 896.82 L1123.11 894.66 L1124.89 894.66 L1125.45 896.82 L1126.29 897.17 L1128.21 896.03 L1129.47 897.29 L1128.33 899.21 L1128.68 900.05 L1130.84 900.61 L1130.84 902.39 L1128.68 902.95 L1128.33 903.79 L1129.47 905.71 L1128.21 906.97 L1126.29 905.83 L1125.45 906.18 L1124.89 908.34 L1123.11 908.34 L1122.55 906.18 L1121.71 905.83 L1119.79 906.97 L1118.53 905.71 L1119.67 903.79 L1119.32 902.95 L1117.16 902.39 L1117.16 900.61 L1119.32 900.05 L1119.67 899.21 L1118.53 897.29 L1119.79 896.03 L1121.71 897.17Z M1127.25 901.50 A3.25 3.25 0 1 0 1120.75 901.50 A3.25 3.25 0 1 0 1127.25 901.50Z" fill="#555" fill-rule="evenodd" stroke="#555" stroke-width="0.6" stroke-linejoin="round"/><rect x="465" y="951.70" width="657" height="1" fill="#e6e6e6"/><text x="460" y="956.2" font-family="Liberation Sans" font-size="11" text-anchor="end" fill="#111" stroke="#111" stroke-width="0.3">110</text><rect x="465" y="966.55" width="657" height="1" fill="#e6e6e6"/><text x="460" y="971.1" font-family="Liberation Sans" font-size="11" text-anchor="end" fill="#111" stroke="#111" stroke-width="0.3">100</text><rect x="465" y="981.40" width="657" height="1" fill="#e6e6e6"/><text x="460" y="985.9" font-family="Liberation Sans" font-size="11" text-anchor="end" fill="#111" stroke="#111" stroke-width="0.3">90</text><rect x="465" y="996.25" width="657" height="1" fill="#e6e6e6"/><text x="460" y="1000.8" font-family="Liberation Sans" font-size="11" text-anchor="end" fill="#111" stroke="#111" stroke-width="0.3">80</text><rect x="465" y="1011.10" width="657" height="1" fill="#e6e6e6"/><text x="460" y="1015.6" font-family="Liberation Sans" font-size="11" text-anchor="end" fill="#111" stroke="#111" stroke-width="0.3">70</text><rect x="465" y="1025.95" width="657" height="1" fill="#e6e6e6"/><text x="460" y="1030.5" font-family="Liberation Sans" font-size="11" text-anchor="end" fill="#111" stroke="#111" stroke-width="0.3">60</text><rect x="465" y="1040.80" width="657" height="1" fill="#e6e6e6"/><text x="460" y="1045.3" font-family="Liberation Sans" font-size="11" text-anchor="end" fill="#111" stroke="#111" stroke-width="0.3">50</text><rect x="465" y="1055.65" width="657" height="1" fill="#e6e6e6"/><text x="460" y="1060.2" font-family="Liberation Sans" font-size="11" text-anchor="end" fill="#111" stroke="#111" stroke-width="0.3">40</text><rect x="487.9" y="945" width="1" height="100" fill="#e6e6e6"/><rect x="574.9" y="945" width="1" height="100" fill="#e6e6e6"/><rect x="661.9" y="945" width="1" height="100" fill="#e6e6e6"/><rect x="748.9" y="945" width="1" height="100" fill="#e6e6e6"/><rect x="835.9" y="945" width="1" height="100" fill="#e6e6e6"/><rect x="922.9" y="945" width="1" height="100" fill="#e6e6e6"/><rect x="1009.9" y="945" width="1" height="100" fill="#e6e6e6"/><rect x="1096.9" y="945" width="1" height="100" fill="#e6e6e6"/><path d="M488.40 967.05 C488.40 967.05 540.60 973.11 575.40 975.81 C610.20 978.51 627.60 980.56 662.40 980.56 C697.20 980.56 714.60 971.36 749.40 971.36 C784.20 971.36 801.60 979.67 836.40 979.67 C871.20 979.67 888.60 955.76 923.40 955.76 C958.20 955.76 975.60 969.72 1010.40 969.72 C1045.20 969.72 1097.40 962.89 1097.40 962.89" fill="none" stroke="#f39a3e" stroke-width="3" stroke-linejoin="round" stroke-linecap="round"/><circle cx="488.4" cy="967.05" r="4" fill="#f39a3e" stroke="#fff" stroke-width="1.5"/><circle cx="575.4" cy="975.81" r="4" fill="#f39a3e" stroke="#fff" stroke-width="1.5"/><circle cx="662.4" cy="980.56" r="4" fill="#f39a3e" stroke="#fff" stroke-width="1.5"/><circle cx="749.4" cy="971.36" r="4" fill="#f39a3e" stroke="#fff" stroke-width="1.5"/><circle cx="836.4" cy="979.67" r="4" fill="#f39a3e" stroke="#fff" stroke-width="1.5"/><circle cx="923.4" cy="955.76" r="4" fill="#f39a3e" stroke="#fff" stroke-width="1.5"/><circle cx="1010.4" cy="969.72" r="4" fill="#f39a3e" stroke="#fff" stroke-width="1.5"/><circle cx="1097.4" cy="962.89" r="4" fill="#f39a3e" stroke="#fff" stroke-width="1.5"/><path d="M488.40 967.05 C488.40 967.05 540.60 985.76 575.40 985.76 C610.20 985.76 627.60 983.74 662.40 981.16 C697.20 978.57 714.60 972.84 749.40 972.84 C784.20 972.84 801.60 978.93 836.40 978.93 C871.20 978.93 888.60 969.72 923.40 969.72 C958.20 969.72 975.60 969.72 1010.40 969.72 C1045.20 969.72 1097.40 977.74 1097.40 977.74" fill="none" stroke="#5bc0d8" stroke-width="3" stroke-linejoin="round" stroke-linecap="round"/><circle cx="488.4" cy="967.05" r="4" fill="#5bc0d8" stroke="#fff" stroke-width="1.5"/><circle cx="575.4" cy="985.76" r="4" fill="#5bc0d8" stroke="#fff" stroke-width="1.5"/><circle cx="662.4" cy="981.16" r="4" fill="#5bc0d8" stroke="#fff" stroke-width="1.5"/><circle cx="749.4" cy="972.84" r="4" fill="#5bc0d8" stroke="#fff" stroke-width="1.5"/><circle cx="836.4" cy="978.93" r="4" fill="#5bc0d8" stroke="#fff" stroke-width="1.5"/><circle cx="923.4" cy="969.72" r="4" fill="#5bc0d8" stroke="#fff" stroke-width="1.5"/><circle cx="1010.4" cy="969.72" r="4" fill="#5bc0d8" stroke="#fff" stroke-width="1.5"/><circle cx="1097.4" cy="977.74" r="4" fill="#5bc0d8" stroke="#fff" stroke-width="1.5"/><text x="1513" y="905.5" font-family="Liberation Sans" font-size="14" text-anchor="middle" fill="#4d4d4f" font-weight="bold" letter-spacing="0.3">Evolution des GES d&#39;origine énergétique par habitant</text><text x="1513" y="925" font-family="Liberation Sans" font-size="13" text-anchor="middle" fill="#111" >(en teqCO2 / hab.)</text><path d="M1864.55 896.82 L1865.11 894.66 L1866.89 894.66 L1867.45 896.82 L1868.29 897.17 L1870.21 896.03 L1871.47 897.29 L1870.33 899.21 L1870.68 900.05 L1872.84 900.61 L1872.84 902.39 L1870.68 902.95 L1870.33 903.79 L1871.47 905.71 L1870.21 906.97 L1868.29 905.83 L1867.45 906.18 L1866.89 908.34 L1865.11 908.34 L1864.55 906.18 L1863.71 905.83 L1861.79 906.97 L1860.53 905.71 L1861.67 903.79 L1861.32 902.95 L1859.16 902.39 L1859.16 900.61 L1861.32 900.05 L1861.67 899.21 L1860.53 897.29 L1861.79 896.03 L1863.71 897.17Z M1869.25 901.50 A3.25 3.25 0 1 0 1862.75 901.50 A3.25 3.25 0 1 0 1869.25 901.50Z" fill="#555" fill-rule="evenodd" stroke="#555" stroke-width="0.6" stroke-linejoin="round"/><rect x="1202" y="951.70" width="662" height="1" fill="#e6e6e6"/><text x="1198" y="956.2" font-family="Liberation Sans" font-size="11" text-anchor="end" fill="#111" stroke="#111" stroke-width="0.3">4,0</text><rect x="1202" y="971.95" width="662" height="1" fill="#e6e6e6"/><text x="1198" y="976.5" font-family="Liberation Sans" font-size="11" text-anchor="end" fill="#111" stroke="#111" stroke-width="0.3">3,5</text><rect x="1202" y="992.20" width="662" height="1" fill="#e6e6e6"/><text x="1198" y="996.7" font-family="Liberation Sans" font-size="11" text-anchor="end" fill="#111" stroke="#111" stroke-width="0.3">3,0</text><rect x="1202" y="1012.45" width="662" height="1" fill="#e6e6e6"/><text x="1198" y="1017.0" font-family="Liberation Sans" font-size="11" text-anchor="end" fill="#111" stroke="#111" stroke-width="0.3">2,5</text><rect x="1202" y="1032.70" width="662" height="1" fill="#e6e6e6"/><text x="1198" y="1037.2" font-family="Liberation Sans" font-size="11" text-anchor="end" fill="#111" stroke="#111" stroke-width="0.3">2,0</text><rect x="1202" y="1052.95" width="662" height="1" fill="#e6e6e6"/><text x="1198" y="1057.5" font-family="Liberation Sans" font-size="11" text-anchor="end" fill="#111" stroke="#111" stroke-width="0.3">1,5</text><rect x="1224.2" y="988.65" width="27" height="56.35" fill="#5bc0d8"/><rect x="1257.2" y="960.30" width="27" height="84.70" fill="#f39a3e"/><rect x="1304.2" y="992.70" width="27" height="52.30" fill="#5bc0d8"/><rect x="1337.2" y="972.45" width="27" height="72.55" fill="#f39a3e"/><rect x="1384.2" y="988.65" width="27" height="56.35" fill="#5bc0d8"/><rect x="1417.2" y="972.45" width="27" height="72.55" fill="#f39a3e"/><rect x="1464.2" y="984.60" width="27" height="60.40" fill="#5bc0d8"/><rect x="1497.2" y="972.45" width="27" height="72.55" fill="#f39a3e"/><rect x="1544.2" y="1000.80" width="27" height="44.20" fill="#5bc0d8"/><rect x="1577.2" y="972.45" width="27" height="72.55" fill="#f39a3e"/><rect x="1624.2" y="1000.80" width="27" height="44.20" fill="#5bc0d8"/><rect x="1657.2" y="976.50" width="27" height="68.50" fill="#f39a3e"/><rect x="1704.2" y="1000.80" width="27" height="44.20" fill="#5bc0d8"/><rect x="1737.2" y="976.50" width="27" height="68.50" fill="#f39a3e"/><rect x="1784.2" y="1012.95" width="27" height="32.05" fill="#5bc0d8"/><rect x="1817.2" y="992.70" width="27" height="52.30" fill="#f39a3e"/></svg>
<div id="cookie"></div>
<div class="a" style="left:612.5px;top:1052.93px;font-size:13.2px;line-height:16px;color:#111">Ce site utilise des cookies pour réaliser des statistiques de visites.</div>
<div class="a" style="left:1009px;top:1047.5px;width:123px;height:26px;background:#505255;border:1px solid #d0d0d0"></div>
<div class="a" style="left:670.5px;width:800px;top:1052.80px;font-size:13px;line-height:16px;text-align:center;font-weight:bold;color:#fff">Je suis d'accord</div>
<div class="a" style="left:1136px;top:1047.5px;width:80px;height:26px;background:#505255;border:1px solid #d0d0d0"></div>
<div class="a" style="left:776px;width:800px;top:1052.80px;font-size:13px;line-height:16px;text-align:center;font-weight:bold;color:#fff">Je refuse</div>
<div class="a" style="left:1226px;top:1052.80px;font-size:13px;line-height:16px;color:#333;text-decoration:underline">En savoir plus</div>
</body></html>
